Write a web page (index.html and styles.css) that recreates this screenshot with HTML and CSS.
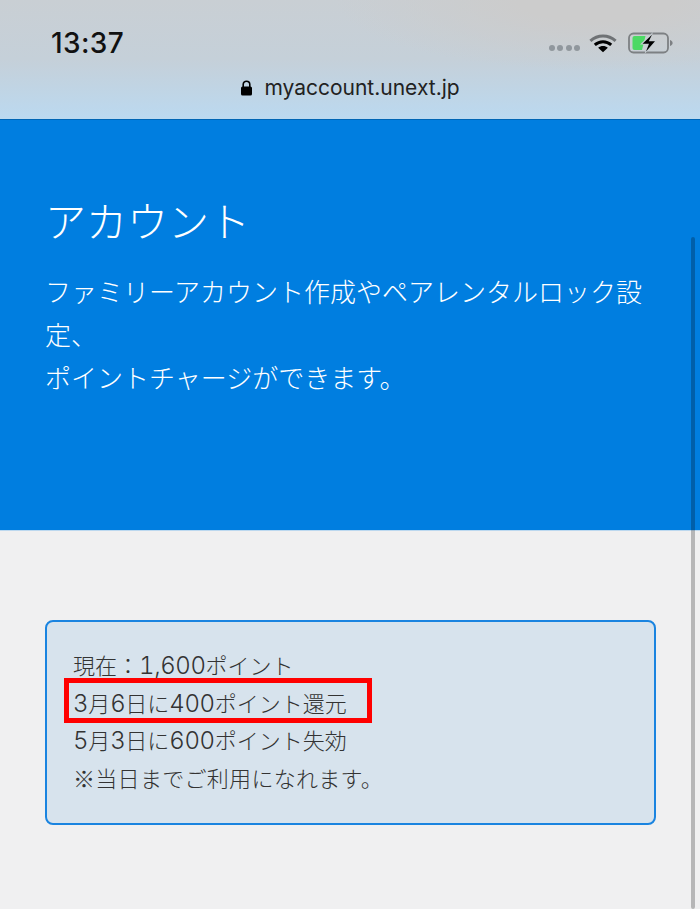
FILE: index.html
```html
<!DOCTYPE html>
<html lang="ja">
<head>
  <meta charset="UTF-8" />
  <meta name="viewport" content="width=device-width, initial-scale=1.0" />
  <title>アカウント</title>
  <link rel="stylesheet" href="styles.css">
</head>
<body>
  <div class="phone">
    <!-- Browser chrome -->
    <div class="chrome">
      <div class="status">
        <span class="time">13:37</span>
        <div class="status-icons">
          <div class="signal"><i></i><i></i><i></i><i></i></div>
          <svg class="wifi" width="28" height="21" viewBox="0 0 30 22">
            <path d="M1.5 8.2C9.2 1.2 20.8 1.2 28.5 8.2" fill="none" stroke="#6f7275" stroke-width="3.2"/>
            <path d="M6.2 12.6C11.4 8 18.6 8 23.8 12.6" fill="none" stroke="#000" stroke-width="3.2"/>
            <path d="M15 20.5L9.8 15.6C12.8 13.2 17.2 13.2 20.2 15.6Z" fill="#000"/>
          </svg>
          <svg class="battery" width="46" height="22" viewBox="0 0 46 22">
            <rect x="1" y="1.5" width="39" height="19" rx="4.5" fill="none" stroke="#7d8083" stroke-width="1.8"/>
            <path d="M42 8v6c1.6-.5 2.6-1.6 2.6-3S43.600 8.500 42 8Z" fill="#7d8083"/>
            <path d="M6.500 4H17.500L14 18H6.500a2 2 0 0 1-2-2V6a2 2 0 0 1 2-2Z" fill="#4cd964"/>
            <path d="M25 0L12 12.500H19.500L16.500 22L29.500 8.500H22Z" fill="#c5ccd1"/>
            <path d="M24 2.800L14.500 11.700H21L18 19.500L27 9.300H20.800Z" fill="#000"/>
          </svg>
        </div>
      </div>
      <div class="address">
        <svg class="lock" width="13" height="16" viewBox="0 0 13 16">
          <path d="M3.200 7V4.500a3.300 3.300 0 0 1 6.600 0V7" fill="none" stroke="#000" stroke-width="1.600"/>
          <rect x="1" y="6.500" width="11" height="9" rx="1.600" fill="#000"/>
        </svg>
        <span>myaccount.unext.jp</span>
      </div>
    </div>

    <div class="scrollbar"></div>

    <!-- Page header -->
    <section class="hero">
      <h1>アカウント</h1>
      <p>ファミリーアカウント作成やペアレンタルロック設定、<br>ポイントチャージができます。</p>
    </section>

    <!-- Points notice -->
    <main class="content">
      <div class="notice">
        <p>現在：<span class="num">1,600</span>ポイント</p>
        <p class="marked"><span class="num">3</span>月<span class="num">6</span>日に<span class="num">400</span>ポイント還元</p>
        <p><span class="num">5</span>月<span class="num">3</span>日に<span class="num">600</span>ポイント失効</p>
        <p class="note">※当日までご利用になれます。</p>
      </div>
    </main>
  </div>
</body>
</html>
```

FILE: styles.css
```css
* {
  box-sizing: border-box;
}

html, body {
  margin: 0;
  padding: 0;
}

body {
  font-family: "Noto Sans CJK JP", "Noto Sans", sans-serif;
  background-color: #f0f0f1;
  color: #333;
}

.phone {
  position: relative;
  width: 700px;
  height: 909px;
  overflow: hidden;
}

.chrome {
  height: 120px;
  background:
    radial-gradient(ellipse 260px 70px at 85% 0%, #cccccc 30%, rgba(204, 204, 204, 0) 100%),
    linear-gradient(180deg, #c9cfd4 0%, #c5d0d9 50%, #bbd9f0 100%);
  border-bottom: 1px solid #0065b5;
}

.status {
  display: flex;
  justify-content: space-between;
  align-items: center;
  height: 66px;
  padding: 20px 26px 0 51px;
}

.time {
  font-family: Inter, "Liberation Sans", sans-serif;
  font-size: 28px;
  font-weight: 500;
  letter-spacing: 0.400px;
  color: #111;
}

.status-icons {
  display: flex;
  align-items: center;
  gap: 9px;
}

.signal {
  display: flex;
  gap: 2.500px;
  margin-top: 10px;
}

.signal i {
  width: 6px;
  height: 6px;
  border-radius: 50%;
  background-color: #90979d;
}

.wifi {
  margin-right: 2px;
}

.address {
  display: flex;
  justify-content: center;
  align-items: center;
  gap: 11px;
  margin-top: 9px;
  font-family: Inter, "Liberation Sans", sans-serif;
  font-size: 21px;
  color: #222;
}

.scrollbar {
  position: absolute;
  top: 237px;
  right: 5px;
  width: 4px;
  height: 672px;
  border-radius: 2px;
  background-color: rgba(0, 0, 0, 0.24);
}

.hero {
  height: 411px;
  padding: 69px 45px 0;
  background-color: #007ee0;
  border-bottom: 1px solid #bcd8ef;
  color: #fff;
}

.hero h1 {
  margin: 0;
  font-size: 41px;
  font-weight: 300;
  line-height: 60px;
}

.hero p {
  margin: 20px 0 0;
  font-size: 26px;
  font-weight: 300;
  line-height: 43px;
}

.content {
  padding: 89px 45px 0;
}

.notice {
  height: 205px;
  width: 611px;
  padding: 24px 26px;
  background-color: #d7e3ed;
  border: 2px solid #1a84e0;
  border-radius: 8px;
  font-size: 22px;
  font-weight: 300;
  line-height: 37.500px;
}

.notice p {
  margin: 0;
  height: 37.500px;
}

.notice .note {
  letter-spacing: 0.300px;
}

.num {
  font-family: Inter, "Liberation Sans", sans-serif;
  font-size: 24px;
  font-variant-numeric: tabular-nums;
  letter-spacing: -0.400px;
  line-height: 1;
}

.marked {
  position: relative;
}

/* the red box drawn over the screenshot */
.marked::after {
  content: "";
  box-sizing: border-box;
  position: absolute;
  top: -6px;
  bottom: -2px;
  left: -9px;
  width: 308px;
  border: 5px solid #f00;
}
```
